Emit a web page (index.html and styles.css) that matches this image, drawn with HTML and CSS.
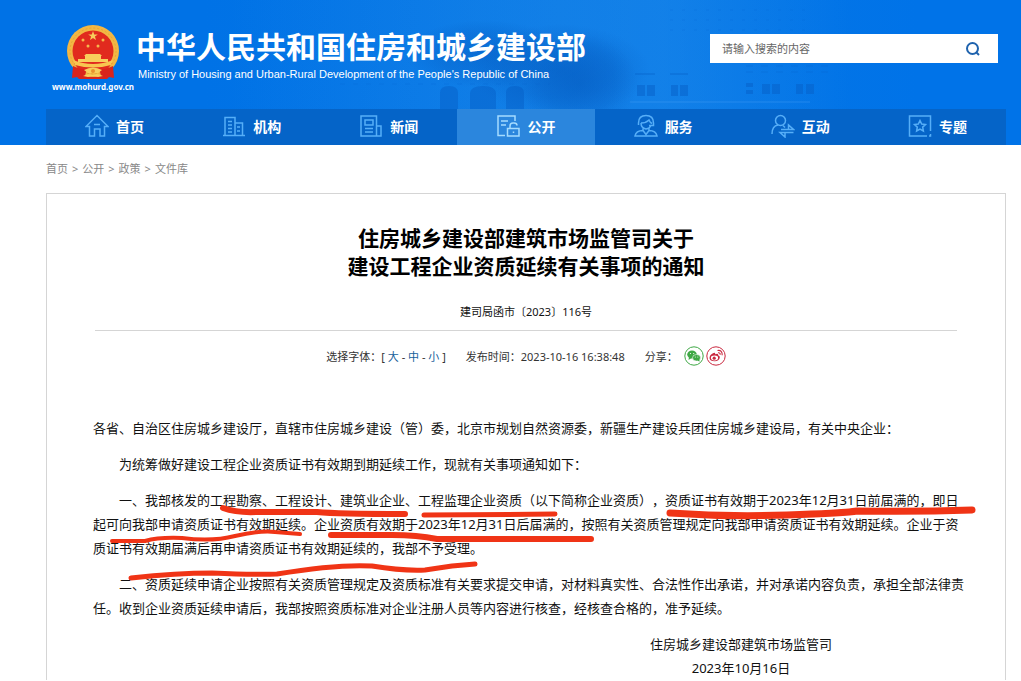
FILE: index.html
```html
<!DOCTYPE html>
<html lang="zh-CN">
<head>
    <meta charset="UTF-8">
    <meta name="viewport" content="width=device-width, initial-scale=1.0">
    <title>住房城乡建设部建筑市场监管司关于建设工程企业资质延续有关事项的通知</title>
    <link rel="stylesheet" href="styles.css">
</head>
<body>
    <header class="header">
        <!-- office building behind the banner -->
        <svg class="skyline" viewBox="0 0 620 145" aria-hidden="true">
            <defs>
                <linearGradient id="wall" x1="0" x2="1" y1="0" y2="0">
                    <stop offset="0" stop-color="#2a94ee" stop-opacity="0"/>
                    <stop offset=".4" stop-color="#2a94ee" stop-opacity=".25"/>
                    <stop offset=".7" stop-color="#2a94ee" stop-opacity=".35"/>
                    <stop offset="1" stop-color="#2a94ee" stop-opacity="0"/>
                </linearGradient>
                <radialGradient id="tree">
                    <stop offset="0" stop-color="#0358bd" stop-opacity=".45"/>
                    <stop offset=".6" stop-color="#0358bd" stop-opacity=".25"/>
                    <stop offset="1" stop-color="#0358bd" stop-opacity="0"/>
                </radialGradient>
            </defs>
            <path fill="url(#wall)" d="M0 0H620V145H0z"/>
            <g fill="#0560c8" fill-opacity=".5">
                <path d="M210 109V93q0-7 9-7t9 7v16zM240 109V94q0-8 13-8t13 8v15zM276 109V93q0-7 9-7t9 7v16z"/>
                <path d="M407 85h8v11h-8zM417 85h8v11h-8zM441 85h7v11h-7zM450 85h8v11h-8zM516 83h7v4h-7zM516 90h7v4h-7zM532 84h8v10h-8zM542 84h8v10h-8zM566 84h7v10h-7zM576 84h8v10h-8z"/>
            </g>
            <g fill="none" stroke="#0560c8" stroke-opacity=".35">
                <path d="M405 74h20M440 74h18" stroke-width="2"/>
                <path d="M516 66h90M516 72h90" stroke-dasharray="7 8"/>
                <path d="M440 10h140M440 20h140M440 30h140" stroke-dasharray="3 9" stroke-opacity=".2"/>
                <path d="M110 84h210" stroke-dasharray="5 8" stroke-opacity=".2"/>
                <path d="M400 102h180" stroke="#55aaf5"/>
            </g>
            <ellipse cx="350" cy="84" rx="58" ry="50" fill="url(#tree)"/>
            <ellipse cx="330" cy="70" rx="90" ry="46" fill="url(#tree)"/>
            <ellipse cx="255" cy="54" rx="80" ry="34" fill="url(#tree)"/>
        </svg>
        <div class="banner">
            <div class="emblem">
                <svg width="54" height="56" viewBox="0 0 54 56" aria-hidden="true">
                    <path d="M8 39h38l1 13-7-1-4 4H18l-4-4-7 1z" fill="#d9241c"/>
                    <circle cx="27" cy="27" r="26" fill="#f3b744"/>
                    <circle cx="27" cy="27" r="23" fill="none" stroke="#e5a637" stroke-dasharray="2 2"/>
                    <circle cx="27" cy="27" r="20.500" fill="#e12a1e"/>
                    <path d="M27 7l1.200 3.400h3.600l-2.900 2.100 1.100 3.500-3-2.100-3 2.100 1.100-3.500-2.900-2.100h3.600z" fill="#f8cc5b"/>
                    <g fill="#f5b94d"><circle cx="17" cy="16" r="1.500"/><circle cx="37" cy="16" r="1.500"/><circle cx="22" cy="22" r="1.500"/><circle cx="32" cy="22" r="1.500"/></g>
                    <path d="M20 30h14l2 2h-1v3h7v3H12v-3h7v-3h-1z" fill="#f8ce5c"/>
                    <path d="M8 39h38l-5 7H13z" fill="#e12a1e"/>
                    <path d="M7 36q20 8 40 0l-2 5q-18 5-36 0z" fill="#f8c650"/>
                    <path d="M7 42q10 5 14 2l-2 8 4 3H13l-2-2-5 1zM47 42q-10 5-14 2l2 8-4 3h10l2-2 5 1z" fill="#d9241c"/>
                    <path d="M18 46q9-5 18 0l-4 3H22z" fill="#f8ce5c"/>
                    <circle cx="27" cy="47" r="2" fill="#e8912c"/>
                    <path d="M17 52q5-3 10-1 5-2 10 1l-5 1-5-1-5 1z" fill="#f8ce5c"/>
                </svg>
                <span class="domain">www.mohurd.gov.cn</span>
            </div>
            <div class="site-name">
                <div class="name-cn">中华人民共和国住房和城乡建设部</div>
                <div class="name-en">Ministry of Housing and Urban-Rural Development of the People's Republic of China</div>
            </div>
            <form class="search">
                <input type="text" placeholder="请输入搜索的内容" aria-label="搜索">
                <button type="button" aria-label="搜索">
                    <svg width="16" height="16" viewBox="0 0 16 16"><circle cx="7.500" cy="7.500" r="5.500"/><path d="M11.500 11.500l2.500 2.500"/></svg>
                </button>
            </form>
        </div>
        <nav class="nav">
            <a href="#"><svg viewBox="0 0 24 24"><path d="M4.500 12.500H1L12 1.500l11 11h-3.500V22H15v-7H9.500v7h-5zM9 10.500h6"/></svg>首页</a>
            <a href="#"><svg viewBox="0 0 24 24"><path d="M1 21.500h22M3 21V3.500h10V21M13 9h7.500v12M6 7.500h4M6 11h4M6 14.500h4M6 18h4M15 13h3M15 17h3"/></svg>机构</a>
            <a href="#"><svg viewBox="0 0 24 24"><path d="M2 2h15.500v20H2zM17.500 12H22v10h-4.500M6 6h8v5H6zM6 14.500h8M6 18h8"/></svg>新闻</a>
            <a href="#" class="active"><svg viewBox="0 0 24 24"><path d="M9 21.500H2V2h17v5M5 7h7M5 11h5M11.500 14.500H23V22H11.500zM14 14.500V12q0-3 3-3h1q3 0 3 2.500M17.500 17.500v1.500"/></svg>公开</a>
            <a href="#"><svg viewBox="0 0 24 24"><path d="M4.500 11V9q0-7.500 7.500-7.500T19.500 9v2.500H15M7 9q5 0 8-3 1 2.500 3 3.500M7 9q0 5 5 6 4-.5 5-4M9 14.500v2q-7 0-8 5.500h22q-1-5.500-8-5.500v-2M9 16.500l3 4 3-4"/></svg>服务</a>
            <a href="#"><svg viewBox="0 0 24 24"><circle cx="9.500" cy="6.500" r="5"/><path d="M1 20q0-8 6-9M12 11.500l2 2M10 15.500h12.500L17.500 11v4.500M22.500 18.500H9l5 4.500v-4.500"/></svg>互动</a>
            <a href="#"><svg viewBox="0 0 24 24"><path d="M22.500 17V2h-21v20h17.500M21 22h1.500v-2M12 6.500l1.700 3.500 3.800.5-2.800 2.600.7 3.900-3.400-1.900L8.600 17l.7-3.900L6.500 10.500l3.800-.5z"/></svg>专题</a>
        </nav>
    </header>

    <main class="main">
        <div class="breadcrumb"><a href="#">首页</a><span>&gt;</span><a href="#">公开</a><span>&gt;</span><a href="#">政策</a><span>&gt;</span><a href="#">文件库</a></div>
        <article class="article">
            <h1>住房城乡建设部建筑市场监管司关于<br>建设工程企业资质延续有关事项的通知</h1>
            <p class="doc-no">建司局函市〔2023〕116号</p>
            <div class="meta">
                <span>选择字体：[ <a href="#">大</a> - <a href="#">中</a> - <a href="#">小</a> ]</span>
                <span>发布时间：2023-10-16 16:38:48</span>
                <div class="share">
                    <span>分享：</span>
                    <a href="#" aria-label="微信"><svg width="20" height="20" viewBox="0 0 20 20">
                        <circle cx="10" cy="10" r="9.200" fill="#fff" stroke="#3fa845"/>
                        <ellipse cx="8" cy="8.500" rx="4.800" ry="4" fill="#3fa845"/><path d="M5 11l-.5 3 3-2z" fill="#3fa845"/>
                        <ellipse cx="12.500" cy="11.800" rx="4" ry="3.300" fill="#3fa845" stroke="#fff" stroke-width=".6"/><path d="M13 14l2.500 1.700-.3-2.500z" fill="#3fa845"/>
                        <g fill="#fff"><circle cx="6.500" cy="7.500" r=".6"/><circle cx="9.700" cy="7.500" r=".6"/><circle cx="11.300" cy="11" r=".5"/><circle cx="13.800" cy="11" r=".5"/></g>
                    </svg></a>
                    <a href="#" aria-label="微博"><svg width="20" height="20" viewBox="0 0 20 20">
                        <circle cx="10" cy="10" r="9.200" fill="#fff" stroke="#c9283f"/>
                        <path d="M3.500 12q0-3 3.500-4.800 2.500-1 2.200 1 3.300-1.200 3 1 2 .7 1.600 2.600-.8 3.200-5 3.500-5 0-5.300-3.300z" fill="#c9283f"/>
                        <ellipse cx="8.500" cy="12" rx="3.600" ry="2.400" fill="#fff"/><circle cx="8.200" cy="12.200" r="1.600" fill="#c9283f"/>
                        <path d="M11.500 4.500q5-.7 4.700 4.800M12 6.800q2.400-.3 2.200 2" fill="none" stroke="#c9283f" stroke-width="1.100"/>
                    </svg></a>
                </div>
            </div>
            <div class="content">
                <p class="to">各省、自治区住房城乡建设厅，直辖市住房城乡建设（管）委，北京市规划自然资源委，新疆生产建设兵团住房城乡建设局，有关中央企业：</p>
                <p>为统筹做好建设工程企业资质证书有效期到期延续工作，现就有关事项通知如下：</p>
                <p>一、我部核发的工程勘察、工程设计、建筑业企业、工程监理企业资质（以下简称企业资质），资质证书有效期于2023年12月31日前届满的，即日起可向我部申请资质证书有效期延续。企业资质有效期于2023年12月31日后届满的，按照有关资质管理规定向我部申请资质证书有效期延续。企业于资质证书有效期届满后再申请资质证书有效期延续的，我部不予受理。</p>
                <p>二、资质延续申请企业按照有关资质管理规定及资质标准有关要求提交申请，对材料真实性、合法性作出承诺，并对承诺内容负责，承担全部法律责任。收到企业资质延续申请后，我部按照资质标准对企业注册人员等内容进行核查，经核查合格的，准予延续。</p>
            </div>
            <div class="sign">住房城乡建设部建筑市场监管司<br>2023年10月16日</div>

            <!-- red marker lines over the key sentences -->
            <svg class="marks" width="940" height="100" viewBox="0 0 940 100" aria-hidden="true">
                <path stroke-width="6" d="M176 15Q190 20 210 19H270Q290 21 358 21"/>
                <path stroke-width="5" d="M377 22Q440 22 508 21"/>
                <path stroke-width="7" d="M623 20Q680 24 740 22T810 18Q870 19 925 17"/>
                <path stroke-width="4" d="M65 48H98Q112 44 135 45 165 49 188 43 215 37 228 39L253 41"/>
                <path stroke-width="6" d="M284 42H345Q370 42 390 46H544"/>
                <path stroke-width="5" d="M84 85Q130 80 165 80 210 82 230 81 290 71 325 73 355 78 378 77L405 73 428 71"/>
            </svg>
        </article>
    </main>
</body>
</html>
```
FILE: styles.css
```css
* {
    box-sizing: border-box;
}

body {
    margin: 0;
    background: #fff;
    color: #111;
    font-family: "Noto Sans", "Noto Sans CJK SC", sans-serif;
    font-size: 13px;
    text-spacing-trim: space-all;
}

a {
    color: inherit;
    text-decoration: none;
}

h1, p {
    margin: 0;
}

.header {
    position: relative;
    overflow: hidden;
    padding: 0 15px 0 46px;
    background: linear-gradient(90deg, #0072e6 20%, #0877e4 55%, #0073e8 90%);
}

.skyline {
    position: absolute;
    top: 0;
    left: 230px;
    width: 620px;
    height: 145px;
}

.banner {
    position: relative;
    display: flex;
    align-items: flex-start;
    height: 109px;
}

.emblem {
    display: flex;
    flex-direction: column;
    align-items: center;
    width: 90px;
    padding: 24px 0 0 4px;
}

.domain {
    color: #fff;
    font-size: 8px;
    font-weight: bold;
    line-height: 14px;
}

.site-name {
    flex: 1;
    padding-top: 28px;
    color: #fff;
    white-space: nowrap;
}

.name-cn {
    font-size: 30px;
    font-weight: bold;
    line-height: 38px;
}

.name-en {
    padding-left: 2px;
    font-family: "Liberation Sans", sans-serif;
    font-size: 11px;
    line-height: 16px;
}

.search {
    display: flex;
    width: 288px;
    height: 29px;
    margin: 34px 8px 0 0;
    background: #fff;
}

.search input {
    flex: 1;
    min-width: 0;
    padding: 0 12px;
    border: 0;
    background: none;
    font-family: inherit;
    font-size: 11px;
}

.search input::placeholder {
    color: #666;
}

.search button {
    display: flex;
    align-items: center;
    justify-content: center;
    width: 50px;
    padding: 0;
    border: 0;
    background: none;
}

.search svg {
    fill: none;
    stroke: #1f63ae;
    stroke-width: 2;
}

.nav {
    position: relative;
    display: flex;
    height: 36px;
    background: #0564c8;
}

.nav a {
    flex: 1;
    display: flex;
    align-items: center;
    justify-content: center;
    gap: 7px;
    padding-bottom: 2px;
    color: #fff;
    font-size: 14px;
    font-weight: bold;
}

.nav a.active {
    background: #2b86dd;
}

.nav svg {
    width: 24px;
    height: 24px;
    fill: none;
    stroke: #56aef8;
    stroke-width: 1.5;
}

.nav .active svg {
    stroke: #a5dcff;
}

.main {
    padding: 0 15px 0 46px;
}

.breadcrumb {
    height: 48px;
    color: #888;
    font-size: 11px;
    line-height: 48px;
}

.breadcrumb span {
    margin: 0 4px;
}

.article {
    position: relative;
    padding: 30px 48px 0;
    border: 1px solid #d5d5d5;
    border-bottom: 0;
}

.article h1 {
    color: #000;
    font-size: 21px;
    line-height: 28px;
    text-align: center;
}

.doc-no {
    padding: 22px 0 8px;
    border-bottom: 1px solid #d5d5d5;
    font-size: 11px;
    line-height: 20px;
    text-align: center;
}

.meta {
    display: flex;
    align-items: center;
    justify-content: center;
    gap: 20px;
    height: 49px;
    color: #333;
    font-size: 11px;
}

.meta a {
    color: #17609b;
}

.share {
    display: flex;
    align-items: center;
    gap: 2px;
}

.share span {
    margin-right: 4px;
}

.share svg {
    display: block;
}

.content {
    margin: 36px -12px 0 -2px;
    line-height: 24px;
}

.content p {
    margin-bottom: 12px;
    text-indent: 2em;
}

.content .to {
    text-indent: 0;
}

.sign {
    width: 184px;
    margin: 0 124px 0 auto;
    line-height: 24px;
    text-align: center;
    white-space: nowrap;
}

.marks {
    position: absolute;
    top: 299px;
    left: 0;
    fill: none;
    stroke: #f03416;
    stroke-linecap: round;
    stroke-linejoin: round;
}
```
